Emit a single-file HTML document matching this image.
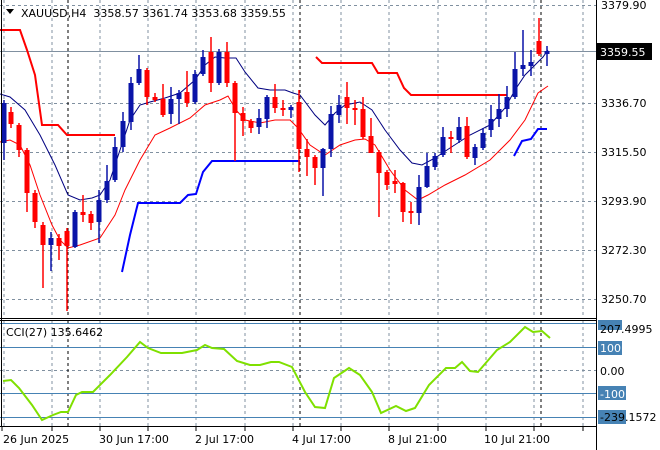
<!DOCTYPE html>
<html><head><meta charset="utf-8"><style>
html,body{margin:0;padding:0;background:#fff;}
svg{display:block;font-family:"DejaVu Sans","Liberation Sans",sans-serif;font-size:11px;}
</style></head><body>
<svg width="660" height="450" viewBox="0 0 660 450" xmlns="http://www.w3.org/2000/svg">
<rect width="660" height="450" fill="#fff"/>
<g stroke="#8090a0" stroke-width="1" stroke-dasharray="3,3" fill="none">
<path d="M4 0V318M52 0V318M100 0V318M148 0V318M196 0V318M245 0V318M293 0V318M341 0V318M389 0V318M438 0V318M486 0V318M534 0V318M583 0V318"/>
<path d="M4 321V426M52 321V426M100 321V426M148 321V426M196 321V426M245 321V426M293 321V426M341 321V426M389 321V426M438 321V426M486 321V426M534 321V426M583 321V426"/>
<path d="M0 5.5H597M0 103.5H597M0 152.5H597M0 201.5H597M0 250.5H597M0 299.5H597M0 370.5H597"/>
</g>
<g stroke="#000" stroke-dasharray="3,3"><path d="M68 0V318M300 0V318M541 0V318M68 321V426M300 321V426M541 321V426"/></g>
<path d="M0 51.5H597" stroke="#8090a0"/>
<polyline fill="none" stroke="#000080" stroke-width="1" points="0,94 10,97 25,110 40,135 55,165 68,195 80,200 92,198 100,195 110,180 120,150 130,120 140,105 150,102 165,98 180,93 195,80 205,65 215,57 225,58 236,58 245,72 258,88 270,90 285,90 293,93 300,95 315,115 325,125 335,113 345,105 360,102 372,110 385,130 400,150 412,163 422,165 435,158 450,148 470,135 490,125 505,108 515,90 525,75 535,65 543,57 548,50"/>
<polyline fill="none" stroke="#ff0000" stroke-width="1" points="0,142 10,140 20,145 30,165 40,195 52,225 60,240 68,248 80,245 100,238 115,215 125,190 140,160 155,135 170,128 190,118 205,105 220,100 228,96 236,110 245,120 260,123 275,120 290,120 298,128 310,145 325,155 340,145 355,140 365,139 375,145 390,170 405,190 418,200 428,195 445,185 465,175 490,160 510,140 525,120 538,93 548,86"/>
<polyline fill="none" stroke="#ff0000" stroke-width="2" points="0,30 20,30 27,50 35,75 42,125 58,125 67,135 115,135"/>
<polyline fill="none" stroke="#ff0000" stroke-width="2" points="316,57 322,63 372,63 378,73 397,73 404,88 411,95 507,95"/>
<polyline fill="none" stroke="#0000ff" stroke-width="2" points="122,272 130,235 138,203 180,203 188,195 196,194 203,172 212,161 300,161"/>
<polyline fill="none" stroke="#0000ff" stroke-width="2" points="514,156 522,141 531,139 538,129 547,129"/>
<g stroke-width="1.5">
<g stroke="#ff0000" fill="#ff0000">
<path d="M11 107V128M19 123V157M27 148V212M35 190V228M43 222V288M59 234V260M67 228V311M83 195V222M91 211V230M147 68V105M155 93V102M163 84V117M187 71V107M211 37V92M227 42V87M235 81V161M243 107V136M251 119V133M275 84V113M283 100V116M299 90V172M307 139V176M315 155V185M347 82V124M355 100V125M363 97V139M371 118V153M379 150V217M387 170V190M395 170V193M403 182V222M411 202V224M451 131V153M467 117V159M539 18V56"/>
<g stroke="none">
<rect x="8.5" y="112" width="5" height="12"/><rect x="16.5" y="125" width="5" height="25"/><rect x="24.5" y="150" width="5" height="43"/><rect x="32.5" y="193" width="5" height="29"/><rect x="40.5" y="225" width="5" height="20"/><rect x="56.5" y="238" width="5" height="8"/><rect x="64.5" y="231" width="5" height="15"/><rect x="80.5" y="212" width="5" height="3"/><rect x="88.5" y="214" width="5" height="9"/><rect x="144.5" y="70" width="5" height="27"/><rect x="152.5" y="97" width="5" height="3"/><rect x="160.5" y="99" width="5" height="16"/><rect x="184.5" y="92" width="5" height="11"/><rect x="208.5" y="52" width="5" height="31"/><rect x="224.5" y="52" width="5" height="31"/><rect x="232.5" y="83" width="5" height="30"/><rect x="240.5" y="113" width="5" height="8"/><rect x="248.5" y="121" width="5" height="7"/><rect x="272.5" y="97" width="5" height="11"/><rect x="280.5" y="108" width="5" height="2"/><rect x="296.5" y="102" width="5" height="47"/><rect x="304.5" y="149" width="5" height="8"/><rect x="312.5" y="157" width="5" height="11"/><rect x="344.5" y="97" width="5" height="11"/><rect x="352.5" y="108" width="5" height="2"/><rect x="360.5" y="109" width="5" height="28"/><rect x="368.5" y="136" width="5" height="17"/><rect x="376.5" y="152" width="5" height="21"/><rect x="384.5" y="172" width="5" height="13"/><rect x="392.5" y="181" width="5" height="3"/><rect x="400.5" y="183" width="5" height="29"/><rect x="408.5" y="211" width="5" height="2"/><rect x="448.5" y="137" width="5" height="2"/><rect x="464.5" y="126" width="5" height="31"/><rect x="536.5" y="41" width="5" height="13"/>
</g></g>
<g stroke="#0a14a8" fill="#0a14a8">
<path d="M4 100V160M51 232V271M75 210V248M99 190V243M107 165V203M115 137V182M123 112V152M131 77V130M139 55V85M171 87V124M179 90V124M195 70V104M203 50V76M219 49V85M259 109V134M267 95V128M291 105V118M323 148V196M331 106V157M339 95V123M419 175V225M427 153V188M435 153V170M443 127V157M459 117V143M475 144V165M483 128V150M491 105V137M499 94V127M507 86V117M515 52V99M523 30V76M531 50V76M547 46V66"/>
<g stroke="none">
<rect x="1.5" y="103" width="5" height="40"/><rect x="48.5" y="238" width="5" height="7"/><rect x="72.5" y="212" width="5" height="35"/><rect x="96.5" y="200" width="5" height="22"/><rect x="104.5" y="181" width="5" height="19"/><rect x="112.5" y="147" width="5" height="33"/><rect x="120.5" y="121" width="5" height="26"/><rect x="128.5" y="83" width="5" height="39"/><rect x="136.5" y="69" width="5" height="14"/><rect x="168.5" y="99" width="5" height="15"/><rect x="176.5" y="93" width="5" height="6"/><rect x="192.5" y="74" width="5" height="28"/><rect x="200.5" y="57" width="5" height="17"/><rect x="216.5" y="52" width="5" height="31"/><rect x="256.5" y="118" width="5" height="9"/><rect x="264.5" y="97" width="5" height="22"/><rect x="288.5" y="107" width="5" height="3"/><rect x="320.5" y="149" width="5" height="19"/><rect x="328.5" y="114" width="5" height="35"/><rect x="336.5" y="105" width="5" height="10"/><rect x="416.5" y="187" width="5" height="26"/><rect x="424.5" y="166" width="5" height="21"/><rect x="432.5" y="156" width="5" height="11"/><rect x="440.5" y="137" width="5" height="18"/><rect x="456.5" y="127" width="5" height="13"/><rect x="472.5" y="147" width="5" height="11"/><rect x="480.5" y="133" width="5" height="15"/><rect x="488.5" y="119" width="5" height="11"/><rect x="496.5" y="109" width="5" height="10"/><rect x="504.5" y="97" width="5" height="12"/><rect x="512.5" y="69" width="5" height="28"/><rect x="520.5" y="65" width="5" height="4"/><rect x="528.5" y="62" width="5" height="4"/><rect x="544.5" y="51" width="5" height="3"/>
</g></g>
</g>
<g stroke="#4682b4"><path d="M0 323.5H597M0 347.5H597M0 393.5H597M0 417.5H597"/></g>
<polyline fill="none" stroke="#7fe000" stroke-width="2" points="3,381 11,380 19,388 32,405 42,420 53,415 61,412 68,412 76,395 82,392 93,392 110,375 127,357 140,342 148,348 161,353 182,353 197,350 205,345 212,348 224,349 237,361 250,365 260,365 271,362 279,362 292,367 305,392 315,407 325,408 334,378 349,368 360,375 372,392 381,413 396,406 406,411 415,408 429,385 446,368 455,368 462,362 470,371 478,372 497,350 510,342 525,327 533,332 542,331 550,338"/>
<g fill="none" stroke="#000"><path d="M596.5 0V450M0 318.5H597M0 320.5H597M0 426.5H597M1.5 0V426"/></g>
<g fill="#000">
<text x="601" y="9">3379.90</text>
<text x="601" y="107">3336.70</text>
<text x="601" y="156">3315.50</text>
<text x="601" y="205">3293.90</text>
<text x="601" y="254">3272.30</text>
<text x="601" y="303">3250.70</text>
</g>
<rect x="597" y="43" width="55" height="17" fill="#000"/>
<text x="600" y="56" fill="#fff">3359.55</text>
<g fill="#4682b4">
<rect x="598" y="320" width="24" height="10"/>
<rect x="598" y="341" width="24" height="14"/>
<rect x="598" y="386" width="28" height="14"/>
<rect x="598" y="410" width="28" height="14"/>
</g>
<text x="600" y="333" fill="#000">207.4995</text>
<text x="600" y="352" fill="#fff">100</text>
<text x="600" y="375" fill="#000">0.00</text>
<text x="600" y="398" fill="#fff">-100</text>
<text x="600" y="421" fill="#000">-239.1572</text>
<g fill="#000">
<text x="3" y="443">26 Jun 2025</text>
<text x="99" y="443">30 Jun 17:00</text>
<text x="195" y="443">2 Jul 17:00</text>
<text x="292" y="443">4 Jul 17:00</text>
<text x="388" y="443">8 Jul 21:00</text>
<text x="484" y="443">10 Jul 21:00</text>
</g>
<path d="M2 427V431M52 427V431M100 427V431M148 427V431M196 427V431M245 427V431M293 427V431M341 427V431M389 427V431M438 427V431M486 427V431M534 427V431M583 427V431" stroke="#000"/>
<path d="M6 9L14 9L10 14Z" fill="#000"/>
<text x="21" y="17" fill="#000">XAUUSD,H4&#160;&#160;3358.57 3361.74 3353.68 3359.55</text>
<text x="6" y="336" fill="#000">CCI(27) 135.6462</text>
</svg>
</body></html>
